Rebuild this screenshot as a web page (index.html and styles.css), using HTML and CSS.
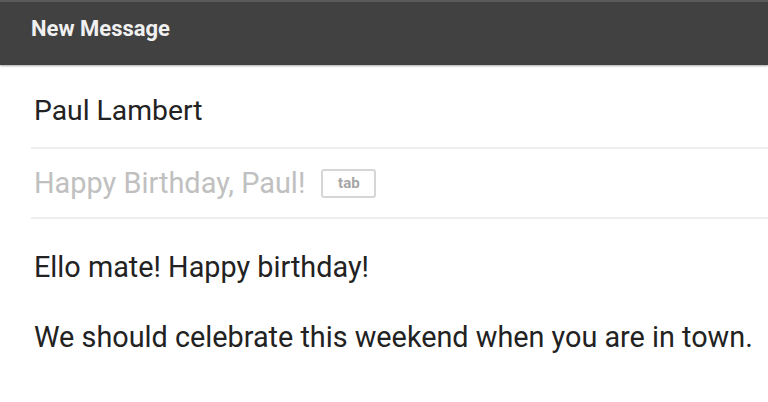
FILE: index.html
```html
<!DOCTYPE html>
<html>
    <head>
        <title>New Message</title>
        <link rel="stylesheet" href="styles.css">
    </head>
    <body>
        <div class="header">New Message</div>
        <div class="compose">
            <div class="field to">Paul Lambert</div>
            <div class="field subject">
                <span class="hint">Happy Birthday, Paul!</span>
                <span class="key">tab</span>
            </div>
            <div class="body">
                <p>Ello mate! Happy birthday!</p>
                <p>We should celebrate this weekend when you are in town.</p>
            </div>
        </div>
    </body>
</html>
```

FILE: styles.css
```css
body {
    margin: 0;
    background-color: white;
    font-family: Roboto, "Liberation Sans", sans-serif;
    overflow: hidden;
}
.header {
    height: 65px;
    box-sizing: border-box;
    padding: 16px 31px 0;
    background-color: #414141;
    border-top: 2px solid #5a5a5a;
    box-shadow: 0 1px 2px rgba(0, 0, 0, 0.35);
    color: #f0f0f0;
    font-size: 22px;
    line-height: 22px;
    font-weight: bold;
}
.compose {
    padding-left: 31px;
}
.field {
    box-sizing: border-box;
    padding-left: 3px;
    border-bottom: 2px solid #eeeeee;
}
.to {
    height: 84px;
    padding-top: 32px;
    color: #222;
    font-size: 28.3px;
    line-height: 28px;
}
.subject {
    display: flex;
    align-items: center;
    height: 70px;
    color: #c0c0c0;
    font-size: 28.9px;
    line-height: 29px;
}
.key {
    display: flex;
    align-items: center;
    justify-content: center;
    box-sizing: border-box;
    width: 55px;
    height: 29px;
    margin-left: 16px;
    border: 2px solid #d6d6d6;
    border-radius: 3px;
    color: #a6a6a6;
    font-size: 15px;
    font-weight: bold;
}
.body {
    padding: 34px 3px 0;
    color: #222;
    font-size: 28.8px;
    line-height: 29px;
}
.body p {
    margin: 0 0 41px;
}
```
